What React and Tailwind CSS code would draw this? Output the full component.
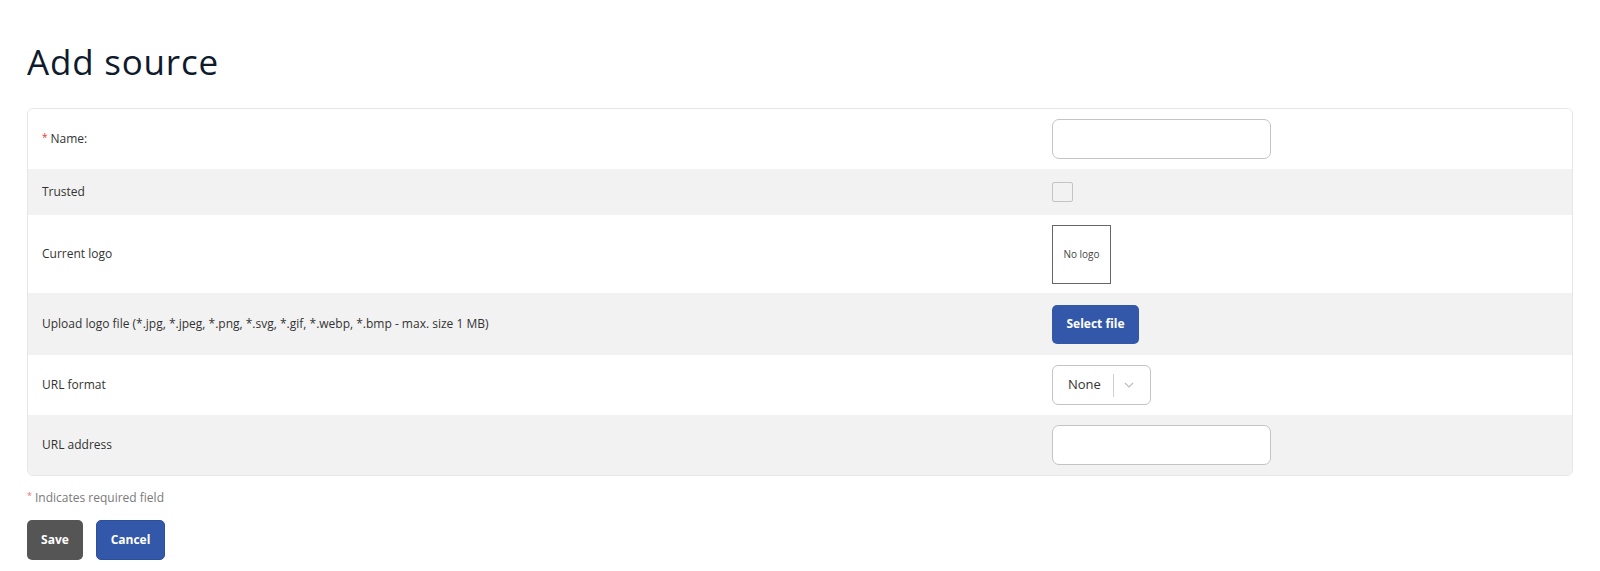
import React from "react";

const font = { fontFamily: '"Open Sans", "Liberation Sans", sans-serif' };

function Row({ label, required, bg, h, children }) {
  return (
    <div className={`flex items-center ${bg ? "bg-[#f2f2f2]" : "bg-white"} ${h}`}>
      <div className="w-[1024px] shrink-0 pl-[14px] text-[12px] text-[#333333]">
        {required && <span className="text-[#e53935] mr-[3px] text-[10px] align-top">*</span>}
        {label}
      </div>
      <div className="flex items-center">{children}</div>
    </div>
  );
}

export default function App() {
  return (
    <div className="min-h-[571px] bg-white px-[27px] pr-[27px]" style={font}>
      <h1 className="pt-[36px] pb-[21px] text-[35px] leading-[51px] text-[#0f1b2d] font-normal tracking-[0.8px]">
        Add source
      </h1>
      <div className="border border-[#e6e6e6] rounded-[6px] overflow-hidden">
        <Row label="Name:" required h="h-[60px]">
          <input className="w-[219px] h-[40px] rounded-[7px] border border-[#c4c4c4] bg-white outline-none" />
        </Row>
        <Row label="Trusted" bg h="h-[46px]">
          <div className="w-[21px] h-[20px] border border-[#c4c4c4] rounded-[2px] bg-[#f2f2f2]" />
        </Row>
        <Row label="Current logo" h="h-[78px]">
          <div className="w-[59px] h-[59px] border border-[#666666] flex items-center justify-center text-[10px] text-[#444]">
            No logo
          </div>
        </Row>
        <Row label="Upload logo file (*.jpg, *.jpeg, *.png, *.svg, *.gif, *.webp, *.bmp - max. size 1 MB)" bg h="h-[62px]">
          <button className="w-[87px] h-[39px] rounded-[5px] bg-[#3358a9] text-white text-[12px] font-bold">
            Select file
          </button>
        </Row>
        <Row label="URL format" h="h-[60px]">
          <div className="w-[99px] h-[40px] rounded-[6px] border border-[#c4c4c4] bg-white flex items-center">
            <span className="pl-[15px] text-[13px] text-[#333] w-[60px]">None</span>
            <span className="w-px h-[23px] bg-[#d0d0d0]" />
            <svg className="ml-[10px]" width="10" height="6" viewBox="0 0 10 6" fill="none">
              <path d="M1 1l4 4 4-4" stroke="#bdbdbd" strokeWidth="1.2" />
            </svg>
          </div>
        </Row>
        <Row label="URL address" bg h="h-[60px]">
          <input className="w-[219px] h-[40px] rounded-[7px] border border-[#c4c4c4] bg-white outline-none" />
        </Row>
      </div>
      <div className="mt-[13px] text-[12px] text-[#7a7a7a]">
        <span className="text-[#e57373] mr-[3px] text-[9px] align-top">*</span>Indicates required field
      </div>
      <div className="mt-[13px] flex gap-[13px]">
        <button className="w-[56px] h-[40px] rounded-[5px] bg-[#555555] text-white text-[12px] font-bold">Save</button>
        <button className="w-[69px] h-[40px] rounded-[5px] bg-[#3358a9] border border-[#2c4f9e] text-white text-[12px] font-bold">Cancel</button>
      </div>
    </div>
  );
}
